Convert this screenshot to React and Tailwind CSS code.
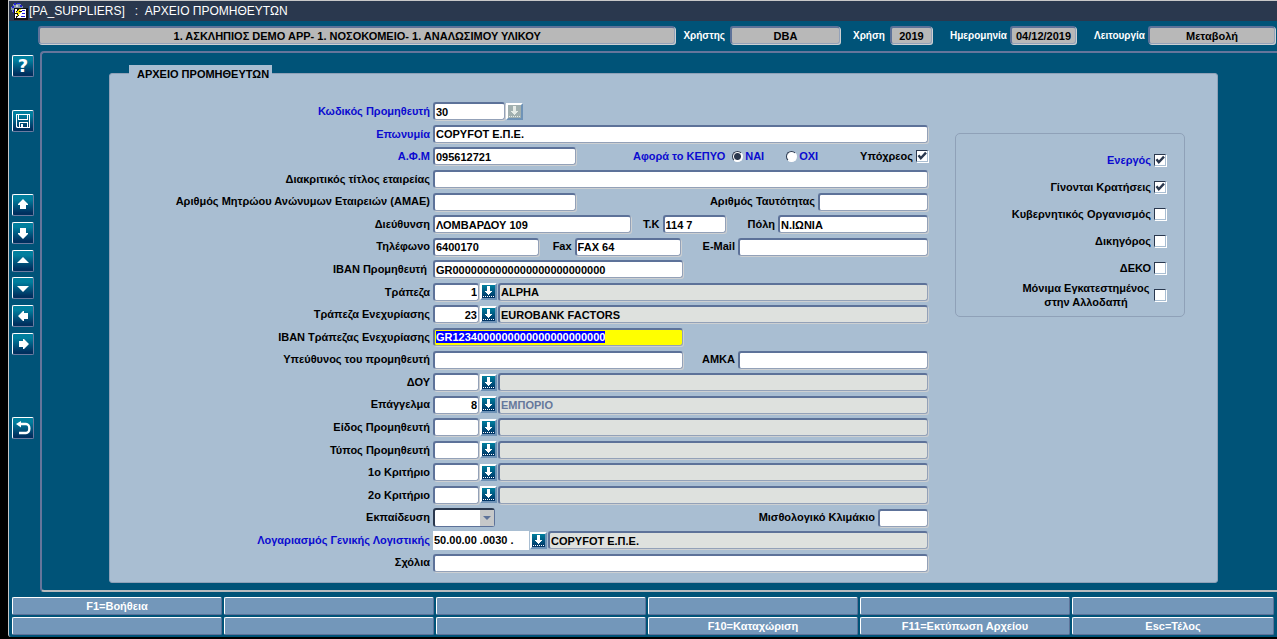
import { clsx } from 'clsx';

const box =
  'h-[18px] min-w-0 rounded-[3px] border-t-2 border-l-2 border-r border-b border-t-[#5d7299] border-l-[#5d7299] border-r-[#93a1b8] border-b-[#93a1b8] px-px text-[11px] leading-[15px] font-bold shadow-[1px_1px_0_#cdd0d2] outline-none';

function Field({ id, label, value = '', width = 'flex-1', className = 'bg-white text-black', ...rest }) {
  return (
    <input
      id={id}
      aria-label={label}
      defaultValue={value}
      className={clsx(box, width, className)}
      {...rest}
    />
  );
}

function Label({ htmlFor, blue, className, children }) {
  return (
    <label htmlFor={htmlFor} className={clsx('whitespace-nowrap', blue && 'text-[#0b0bd0]', className)}>
      {children}
    </label>
  );
}

function ListButton({ label, disabled }) {
  return (
    <button
      type="button"
      aria-label={label}
      disabled={disabled}
      className={clsx(
        'h-[17px] w-[17px] shrink-0 border-2 border-t-white border-l-white border-r-[#6f93b7] border-b-[#6f93b7]',
        disabled ? 'bg-[#a1b0b0]' : 'bg-linear-to-b from-[#007f9e] to-[#003264]',
      )}
    >
      <svg viewBox="0 0 13 13" className="block h-[13px] w-[13px]" fill={disabled ? '#e6ece8' : '#fff'} shapeRendering="crispEdges">
        <path d="M5 1h3v5h2v1H9v1H8v1H7v1H6V9H5V8H4V7H3V6h2z" />
        <path d="M1 11h1v1H1zM3 11h1v1H3zM5 11h1v1H5zM7 11h1v1H7zM9 11h1v1H9zM11 11h1v1h-1z" />
      </svg>
    </button>
  );
}

function Row({ label, htmlFor, blue, children }) {
  return (
    <div className="grid grid-cols-[320fr_495fr] items-center gap-x-[3px]">
      <Label htmlFor={htmlFor} blue={blue} className="text-right">
        {label}
      </Label>
      <div className="flex min-w-0 items-center">{children}</div>
    </div>
  );
}

function LookupRow({ id, label, code, text, muted }) {
  return (
    <Row label={label} htmlFor={id}>
      <Field id={id} value={code} width="w-[46px]" className="bg-white text-right text-black" />
      <span className="flex px-px">
        <ListButton label={`Λίστα: ${label}`} />
      </span>
      <Field
        label={`${label} (περιγραφή)`}
        value={text}
        readOnly
        className={clsx('bg-[#dee1de]', muted ? 'text-[#66789b]' : 'text-black')}
      />
    </Row>
  );
}

function Check({ id, checked }) {
  return (
    <span className="relative flex h-3 w-3 shrink-0">
      <input
        id={id}
        type="checkbox"
        defaultChecked={checked}
        className="peer h-3 w-3 appearance-none border border-t-[#2a384e] border-l-[#2a384e] border-r-[#a9bed2] border-b-[#a9bed2] bg-white shadow-[1px_1px_0_#fff]"
      />
      <svg
        viewBox="0 0 12 12"
        className="pointer-events-none absolute inset-0 hidden peer-checked:block"
        fill="none"
        stroke="#2a384e"
        strokeWidth="2.4"
      >
        <path d="M2.5 5.2 4.8 8.2 10 2.6" />
      </svg>
    </span>
  );
}

function Radio({ id, checked }) {
  return (
    <input
      id={id}
      type="radio"
      name="kepyo"
      defaultChecked={checked}
      className="h-[11px] w-[11px] appearance-none rounded-full border border-t-[#2a384e] border-l-[#2a384e] border-r-white border-b-white bg-white checked:bg-[radial-gradient(circle,#2a384e_0_3px,#fff_4px)]"
    />
  );
}

const toolbar = [
  { name: 'Βοήθεια', gap: 'mt-[4px]', text: '?' },
  {
    name: 'Αποθήκευση',
    gap: 'mt-[33px]',
    icon: (
      <path
        fillRule="evenodd"
        d="M3 3h14v14H4l-1-1zM4 4v11l1 1h1v-5h9v5h1V4h-1v5H5V4zM6 4v4h8V4zM7 12v4h1v-3h2v3h4v-4z"
      />
    ),
  },
  { name: 'Πρώτη εγγραφή', gap: 'mt-[62px]', icon: <path d="M10 4l5 5v1h-2v4H7v-4H5V9z" /> },
  { name: 'Τελευταία εγγραφή', gap: 'mt-[6px]', icon: <path d="M7 5h6v5h2v1l-5 5-5-5v-1h2z" /> },
  { name: 'Προηγούμενη εγγραφή', gap: 'mt-[6px]', icon: <path d="M10 6l6 6H4z" /> },
  { name: 'Επόμενη εγγραφή', gap: 'mt-[5px]', icon: <path d="M4 8h12l-6 6z" /> },
  { name: 'Προηγούμενο πεδίο', gap: 'mt-[6px]', icon: <path d="M5 10l5-5h1v2h4v6h-4v2h-1z" /> },
  { name: 'Επόμενο πεδίο', gap: 'mt-[6px]', icon: <path d="M16 10l-5-5h-1v2H6v6h4v2h1z" /> },
  {
    name: 'Επιστροφή',
    gap: 'mt-[62px]',
    icon: (
      <>
        <path d="M3 6l5-3v6.500z" />
        <path d="M6 6h7a3 4 0 0 1 0 9H6" fill="none" stroke="#fff" strokeWidth="2.4" />
      </>
    ),
  },
];

function Toolbar() {
  return (
    <nav className="flex w-[31px] shrink-0 flex-col items-start pl-[3px]">
      {toolbar.map(({ name, gap, icon, text }) => (
        <button
          key={name}
          type="button"
          aria-label={name}
          className={clsx(
            "h-[22px] w-[22px] shrink-0 rounded-[2px] border border-t-white border-l-white border-r-[#6c7ba0] border-b-[#6c7ba0] bg-linear-to-b from-[#007f9e] from-20% to-[#00305f] to-90% font-['DejaVu_Sans',sans-serif] text-[18px] leading-5 text-white",
            gap,
          )}
        >
          {text}
          {icon && (
            <svg viewBox="0 0 20 20" className="block h-5 w-5" fill="#fff">
              {icon}
            </svg>
          )}
        </button>
      ))}
    </nav>
  );
}

function AppIcon() {
  return (
    <svg viewBox="0 0 17 17" className="h-[17px] w-[17px] shrink-0" shapeRendering="crispEdges">
      <path d="M2 1h8v2h2v3H4v4H2V9H1V7H0V4h2z" fill="#7f92ad" />
      <path d="M3 0h2v2H3zM6 0h3v1H6zM9 2h2v2H9zM1 3h2v2H1zM2 7h1v3H2z" fill="#2323d8" />
      <path d="M5 2h2v2H5z" fill="#c5ccd8" />
      <path d="M3 5h14v12H3z" fill="#111" />
      <path d="M4 6h11v9H4z" fill="#fff" />
      <path d="M11 7h3v1h-3zM11 10h3v1h-3zM10 13h4v1h-4z" fill="#1c1ce0" />
      <path d="M7 5h4L9 8h2l-6 8 1-5H4z" fill="#111" />
      <path d="M8 6h2L8 9h2l-4 5 1-4H5z" fill="#f8ea00" />
    </svg>
  );
}

function HeaderItem({ id, label, value, width, gap }) {
  return (
    <div className={clsx('flex items-center', gap)}>
      <label htmlFor={id} className="text-[10px] font-bold text-white">
        {label}
      </label>
      <Field id={id} value={value} readOnly width={width} className="bg-[#b8b8b8] text-center text-black" />
    </div>
  );
}

function Header() {
  return (
    <header className="flex items-center pt-[5px] pr-[2px] pb-[7px] pl-[29px]">
      <Field
        label="Εφαρμογή"
        value="1. ΑΣΚΛΗΠΙΟΣ DEMO APP- 1. ΝΟΣΟΚΟΜΕΙΟ- 1. ΑΝΑΛΩΣΙΜΟΥ ΥΛΙΚΟΥ"
        readOnly
        className="bg-[#b8b8b8] text-center text-black"
      />
      <HeaderItem id="user" label="Χρήστης" value="DBA" width="ml-[5px] w-[110px]" gap="ml-[8px]" />
      <HeaderItem id="year" label="Χρήση" value="2019" width="ml-[5px] w-[42px]" gap="ml-[13px]" />
      <HeaderItem id="date" label="Ημερομηνία" value="04/12/2019" width="ml-[3px] w-[66px]" gap="ml-[18px]" />
      <HeaderItem id="mode" label="Λειτουργία" value="Μεταβολή" width="ml-[3px] w-[127px]" gap="ml-[18px]" />
    </header>
  );
}

function SupplierForm() {
  return (
    <form className="grid min-w-0 auto-rows-fr">
      <Row label="Κωδικός Προμηθευτή" htmlFor="code" blue>
        <Field id="code" value="30" width="w-[72px]" />
        <span className="flex px-px">
          <ListButton label="Λίστα προμηθευτών" disabled />
        </span>
      </Row>
      <Row label="Επωνυμία" htmlFor="name" blue>
        <Field id="name" value="COPYFOT Ε.Π.Ε." />
      </Row>
      <Row label="Α.Φ.Μ" htmlFor="afm" blue>
        <Field id="afm" value="095612721" width="w-[143px]" />
        <span id="kepyo" className="ml-auto text-[#0b0bd0]">
          Αφορά το ΚΕΠΥΟ
        </span>
        <div role="radiogroup" aria-labelledby="kepyo" className="ml-[7px] flex items-center">
          <Radio id="kepyo-yes" checked />
          <Label htmlFor="kepyo-yes" blue className="mr-[22px] ml-[2px]">
            ΝΑΙ
          </Label>
          <Radio id="kepyo-no" />
          <Label htmlFor="kepyo-no" blue className="ml-[2px]">
            ΟΧΙ
          </Label>
        </div>
        <Label htmlFor="liable" className="mr-[3px] ml-[42px]">
          Υπόχρεος
        </Label>
        <Check id="liable" checked />
      </Row>
      <Row label="Διακριτικός τίτλος εταιρείας" htmlFor="title">
        <Field id="title" />
      </Row>
      <Row label="Αριθμός Μητρώου Ανώνυμων Εταιρειών (ΑΜΑΕ)" htmlFor="amae">
        <Field id="amae" width="w-[143px]" />
        <Label htmlFor="identity" className="mr-[3px] ml-auto">
          Αριθμός Ταυτότητας
        </Label>
        <Field id="identity" width="w-[110px]" />
      </Row>
      <Row label="Διεύθυνση" htmlFor="address">
        <Field id="address" value="ΛΟΜΒΑΡΔΟΥ 109" />
        <Label htmlFor="zip" className="mr-[3px] ml-[12px]">
          Τ.Κ
        </Label>
        <Field id="zip" value="114 7" width="w-[63px]" />
        <Label htmlFor="city" className="mr-[3px] ml-[22px]">
          Πόλη
        </Label>
        <Field id="city" value="Ν.ΙΩΝΙΑ" width="w-[150px]" />
      </Row>
      <Row label="Τηλέφωνο" htmlFor="phone">
        <Field id="phone" value="6400170" width="w-[106px]" />
        <Label htmlFor="fax" className="mr-[3px] ml-auto">
          Fax
        </Label>
        <Field id="fax" value="FAX 64" width="w-[106px]" />
        <Label htmlFor="email" className="mr-[3px] ml-[22px]">
          E-Mail
        </Label>
        <Field id="email" width="w-[190px]" />
      </Row>
      <Row label={<span className="pr-[3px]">IBAN Προμηθευτή</span>} htmlFor="iban">
        <Field id="iban" value="GR0000000000000000000000000" width="w-[250px]" />
      </Row>
      <LookupRow id="bank" label="Τράπεζα" code="1" text="ALPHA" />
      <LookupRow id="pledge-bank" label="Τράπεζα Ενεχυρίασης" code="23" text="EUROBANK FACTORS" />
      <Row label="IBAN Τράπεζας Ενεχυρίασης" htmlFor="pledge-iban">
        <Field
          id="pledge-iban"
          value="GR1234000000000000000000000"
          width="w-[250px]"
          className="bg-[#ffff00] text-black selection:bg-[#0000ff] selection:text-white"
          autoFocus
          onFocus={(e) => e.target.select()}
        />
      </Row>
      <Row label="Υπεύθυνος του προμηθευτή" htmlFor="contact">
        <Field id="contact" width="w-[250px]" />
        <Label htmlFor="amka" className="mr-[3px] ml-auto">
          ΑΜΚΑ
        </Label>
        <Field id="amka" width="w-[190px]" />
      </Row>
      <LookupRow id="doy" label="ΔΟΥ" />
      <LookupRow id="job" label="Επάγγελμα" code="8" text="ΕΜΠΟΡΙΟ" muted />
      <LookupRow id="kind" label="Είδος Προμηθευτή" />
      <LookupRow id="type" label="Τύπος Προμηθευτή" />
      <LookupRow id="criterion-1" label="1ο Κριτήριο" />
      <LookupRow id="criterion-2" label="2ο Κριτήριο" />
      <Row label="Εκπαίδευση" htmlFor="education">
        <div className="relative flex">
          <select
            id="education"
            className="h-[19px] w-[62px] appearance-none rounded-[3px] border-t-2 border-l-2 border-r border-b border-t-[#2a384e] border-l-[#2a384e] border-r-[#5d7299] border-b-[#5d7299] bg-white"
          >
            <option></option>
          </select>
          <span className="pointer-events-none absolute top-[2px] right-px flex h-4 w-[14px] items-center justify-center bg-[#c6c8c9]">
            <svg viewBox="0 0 8 4" className="h-1 w-2" fill="#5d7299">
              <path d="M0 0h8L4 4z" />
            </svg>
          </span>
        </div>
        <Label htmlFor="scale" className="mr-[3px] ml-auto">
          Μισθολογικό Κλιμάκιο
        </Label>
        <Field id="scale" width="w-[50px]" />
      </Row>
      <Row label="Λογαριασμός Γενικής Λογιστικής" htmlFor="account" blue>
        <input
          id="account"
          defaultValue="50.00.00 .0030 ."
          className="h-[19px] w-24 bg-white px-px text-[11px] font-bold text-black outline-none"
        />
        <span className="flex px-px">
          <ListButton label="Λίστα λογαριασμών" />
        </span>
        <Field label="Περιγραφή λογαριασμού" value="COPYFOT Ε.Π.Ε." readOnly className="bg-[#dee1de] text-black" />
      </Row>
      <Row label="Σχόλια" htmlFor="notes">
        <Field id="notes" />
      </Row>
    </form>
  );
}

const flags = [
  { id: 'active', label: 'Ενεργός', checked: true, blue: true },
  { id: 'deductions', label: 'Γίνονται Κρατήσεις', checked: true },
  { id: 'government', label: 'Κυβερνητικός Οργανισμός' },
  { id: 'lawyer', label: 'Δικηγόρος' },
  { id: 'deko', label: 'ΔΕΚΟ' },
  { id: 'abroad', label: 'Μόνιμα Εγκατεστημένος στην Αλλοδαπή', wrap: true },
];

function Flags() {
  return (
    <aside className="pt-[33px] pr-8 pl-[27px]">
      <div className="grid auto-rows-[27px] rounded-[5px] border border-[#8fa1b8] pt-[12px] pr-[18px] pb-[8px]">
        {flags.map((flag) => (
          <div key={flag.id} className="flex items-center justify-end gap-[3px]">
            <label
              htmlFor={flag.id}
              className={clsx(
                'leading-[14px]',
                flag.blue && 'text-[#0b0bd0]',
                flag.wrap ? 'w-[130px] text-center' : 'whitespace-nowrap',
              )}
            >
              {flag.label}
            </label>
            <Check id={flag.id} checked={flag.checked} />
          </div>
        ))}
      </div>
    </aside>
  );
}

const functionKeys = ['F1=Βοήθεια', '', '', '', '', '', '', '', '', 'F10=Καταχώριση', 'F11=Εκτύπωση Αρχείου', 'Esc=Τέλος'];

function FunctionKeys() {
  return (
    <footer className="grid grid-cols-[210fr_210fr_210fr_210fr_210fr_202fr] gap-[2px] pt-[5px] pr-[3px] pb-[2px] pl-[3px]">
      {functionKeys.map((text, i) => (
        <button
          key={i}
          type="button"
          aria-label={text || `F${i + 1}`}
          className="h-[18px] rounded-[2px] border border-t-white border-l-white border-r-[#5d7299] border-b-[#5d7299] bg-[#7397ba] text-[11px] leading-4 font-bold text-white"
        >
          {text}
        </button>
      ))}
    </footer>
  );
}

export default function App() {
  return (
    <div className="flex min-h-screen bg-black pb-[2px] pl-2 font-['Liberation_Sans',Arial,sans-serif] text-[11px] font-bold text-black">
      <div className="flex min-w-0 flex-1 flex-col rounded-bl-[3px] border-t border-l border-[#c8c8c8] bg-[#005378]">
        <div className="flex h-5 items-center gap-px bg-[#2a384e] pl-[2px]">
          <AppIcon />
          <h1 className="text-[12px] font-normal whitespace-pre text-white">
            {'[PA_SUPPLIERS]   :  ΑΡΧΕΙΟ ΠΡΟΜΗΘΕΥΤΩΝ'}
          </h1>
        </div>
        <Header />
        <div className="flex flex-1">
          <Toolbar />
          <main className="flex min-w-0 flex-1 flex-col rounded-l-[4px] border-2 border-r-0 border-t-[#66759b] border-b-[#b9bcbf] border-l-[#66759b] pt-5 pr-[59px] pb-[7px] pl-[67px]">
            <section className="relative grid flex-1 grid-cols-[818fr_289fr] rounded-[3px] border border-[#8fa1b8] bg-[#a9bed2] pt-[26px] pb-2">
              <h2 className="absolute -top-[9px] left-[19px] bg-[#a9bed2] pt-px pr-[3px] pl-2 text-[11px] leading-[17px]">
                ΑΡΧΕΙΟ ΠΡΟΜΗΘΕΥΤΩΝ
              </h2>
              <SupplierForm />
              <Flags />
            </section>
          </main>
        </div>
        <FunctionKeys />
      </div>
    </div>
  );
}
